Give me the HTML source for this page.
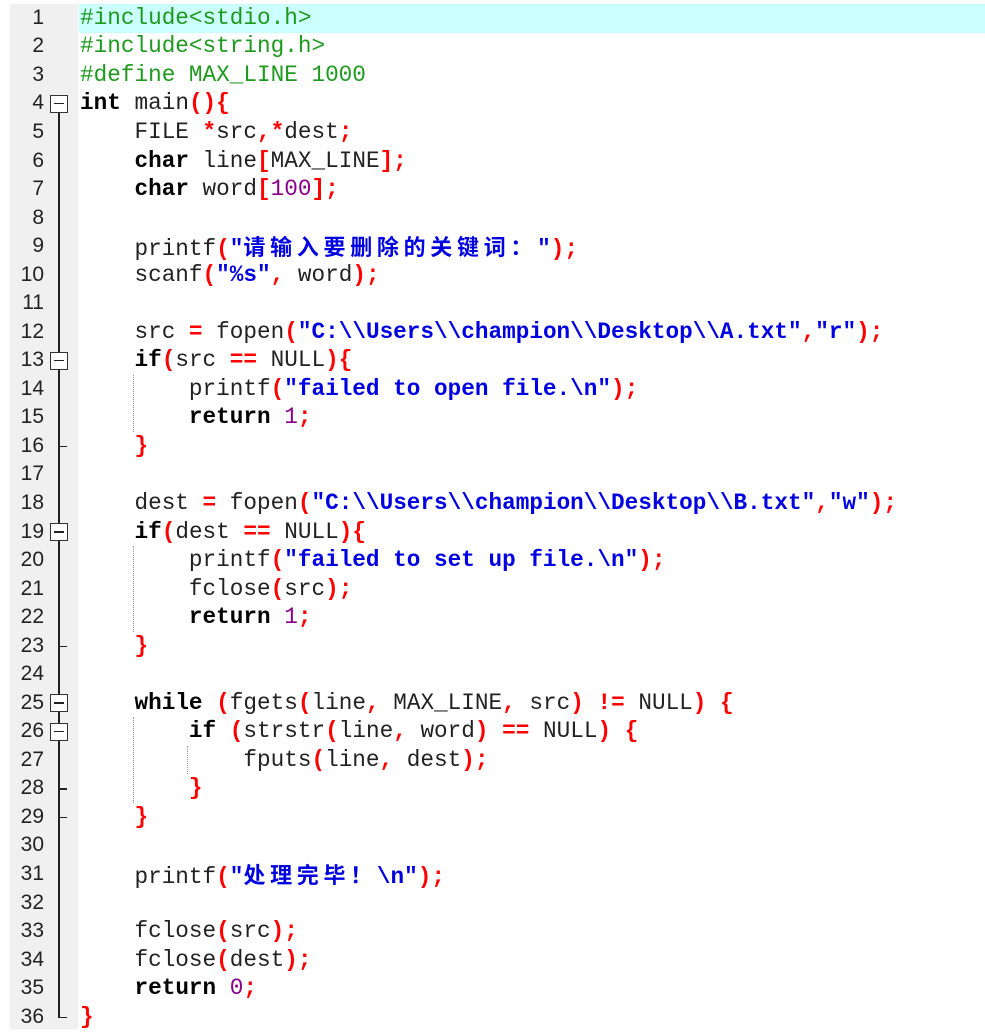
<!DOCTYPE html>
<html><head><meta charset="utf-8"><style>
body{margin:0;width:985px;height:1032px;background:#fff;overflow:hidden;position:relative;font-family:"Liberation Mono",monospace}
#gut{position:absolute;left:10px;top:4px;width:68px;height:1025px;background:#f0f0f0}
#hl{position:absolute;left:79px;top:4px;width:906px;height:28.5px;background:#ccffff}
.ln{position:absolute;left:10px;width:34px;text-align:right;font-family:"Liberation Sans",sans-serif;font-size:21px;color:#222;height:28.54px;line-height:28.54px}
.cl{position:absolute;left:80px;white-space:pre;font-size:22.7px;height:28.54px;line-height:28.54px;color:#222}
.p{color:#1e9a1e}.k{font-weight:bold;color:#000}.o{color:#f00;font-weight:bold}.n{color:#8a008a}.s{color:#0000e0;font-weight:bold}
.c{font-family:"Noto Sans CJK SC",sans-serif;letter-spacing:4.7px;font-size:22px}
.box{position:absolute;left:50px;width:16px;height:16px;border:1px solid #333;background:#fff}
.box:after{content:"";position:absolute;left:3px;right:3px;top:7px;height:1.5px;background:#222}
.vl{position:absolute;left:58px;width:1.5px;background:#222}
.tk{position:absolute;left:58px;width:9px;height:1.5px;background:#222}
.dg{position:absolute;width:0;border-left:1px dotted #999}
</style></head><body>
<div id="gut"></div><div id="hl"></div>
<div class="vl" style="top:104px;height:914px"></div>
<div id="lines"></div>
<script>
var L=[
'<span class="p">#include&lt;stdio.h&gt;</span>',
'<span class="p">#include&lt;string.h&gt;</span>',
'<span class="p">#define MAX_LINE 1000</span>',
'<span class="k">int</span> main<span class="o">(){</span>',
'    FILE <span class="o">*</span>src<span class="o">,*</span>dest<span class="o">;</span>',
'    <span class="k">char</span> line<span class="o">[</span>MAX_LINE<span class="o">];</span>',
'    <span class="k">char</span> word<span class="o">[</span><span class="n">100</span><span class="o">];</span>',
'',
'    printf<span class="o">(</span><span class="s">"<span class="c">请输入要删除的关键词：</span>"</span><span class="o">);</span>',
'    scanf<span class="o">(</span><span class="s">"%s"</span><span class="o">,</span> word<span class="o">);</span>',
'',
'    src <span class="o">=</span> fopen<span class="o">(</span><span class="s">"C:\\\\Users\\\\champion\\\\Desktop\\\\A.txt"</span><span class="o">,</span><span class="s">"r"</span><span class="o">);</span>',
'    <span class="k">if</span><span class="o">(</span>src <span class="o">==</span> NULL<span class="o">){</span>',
'        printf<span class="o">(</span><span class="s">"failed to open file.\\n"</span><span class="o">);</span>',
'        <span class="k">return</span> <span class="n">1</span><span class="o">;</span>',
'    <span class="o">}</span>',
'',
'    dest <span class="o">=</span> fopen<span class="o">(</span><span class="s">"C:\\\\Users\\\\champion\\\\Desktop\\\\B.txt"</span><span class="o">,</span><span class="s">"w"</span><span class="o">);</span>',
'    <span class="k">if</span><span class="o">(</span>dest <span class="o">==</span> NULL<span class="o">){</span>',
'        printf<span class="o">(</span><span class="s">"failed to set up file.\\n"</span><span class="o">);</span>',
'        fclose<span class="o">(</span>src<span class="o">);</span>',
'        <span class="k">return</span> <span class="n">1</span><span class="o">;</span>',
'    <span class="o">}</span>',
'',
'    <span class="k">while</span> <span class="o">(</span>fgets<span class="o">(</span>line<span class="o">,</span> MAX_LINE<span class="o">,</span> src<span class="o">)</span> <span class="o">!=</span> NULL<span class="o">)</span> <span class="o">{</span>',
'        <span class="k">if</span> <span class="o">(</span>strstr<span class="o">(</span>line<span class="o">,</span> word<span class="o">)</span> <span class="o">==</span> NULL<span class="o">)</span> <span class="o">{</span>',
'            fputs<span class="o">(</span>line<span class="o">,</span> dest<span class="o">);</span>',
'        <span class="o">}</span>',
'    <span class="o">}</span>',
'',
'    printf<span class="o">(</span><span class="s">"<span class="c">处理完毕！</span>\\n"</span><span class="o">);</span>',
'',
'    fclose<span class="o">(</span>src<span class="o">);</span>',
'    fclose<span class="o">(</span>dest<span class="o">);</span>',
'    <span class="k">return</span> <span class="n">0</span><span class="o">;</span>',
'<span class="o">}</span>'];
var h='',LH=28.54,T=3.8;
for(var i=0;i<L.length;i++){var t=T+i*LH;
h+='<div class="ln" style="top:'+t+'px">'+(i+1)+'</div><div class="cl" style="top:'+t+'px">'+L[i]+'</div>';}
[4,13,19,25,26].forEach(function(n){h+='<div class="box" style="top:'+(T+(n-1)*LH+5.5)+'px"></div>';});
[16,23,28,29,36].forEach(function(n){h+='<div class="tk" style="top:'+(T+(n-1)*LH+14)+'px"></div>';});
[[133,14,15],[133,20,22],[133,26,28],[187,27,27]].forEach(function(a){var t=T+(a[1]-1)*LH;h+='<div class="dg" style="left:'+a[0]+'px;top:'+t+'px;height:'+((a[2]-a[1]+1)*LH)+'px"></div>';});
document.getElementById('lines').innerHTML=h;
</script>
</body></html>
